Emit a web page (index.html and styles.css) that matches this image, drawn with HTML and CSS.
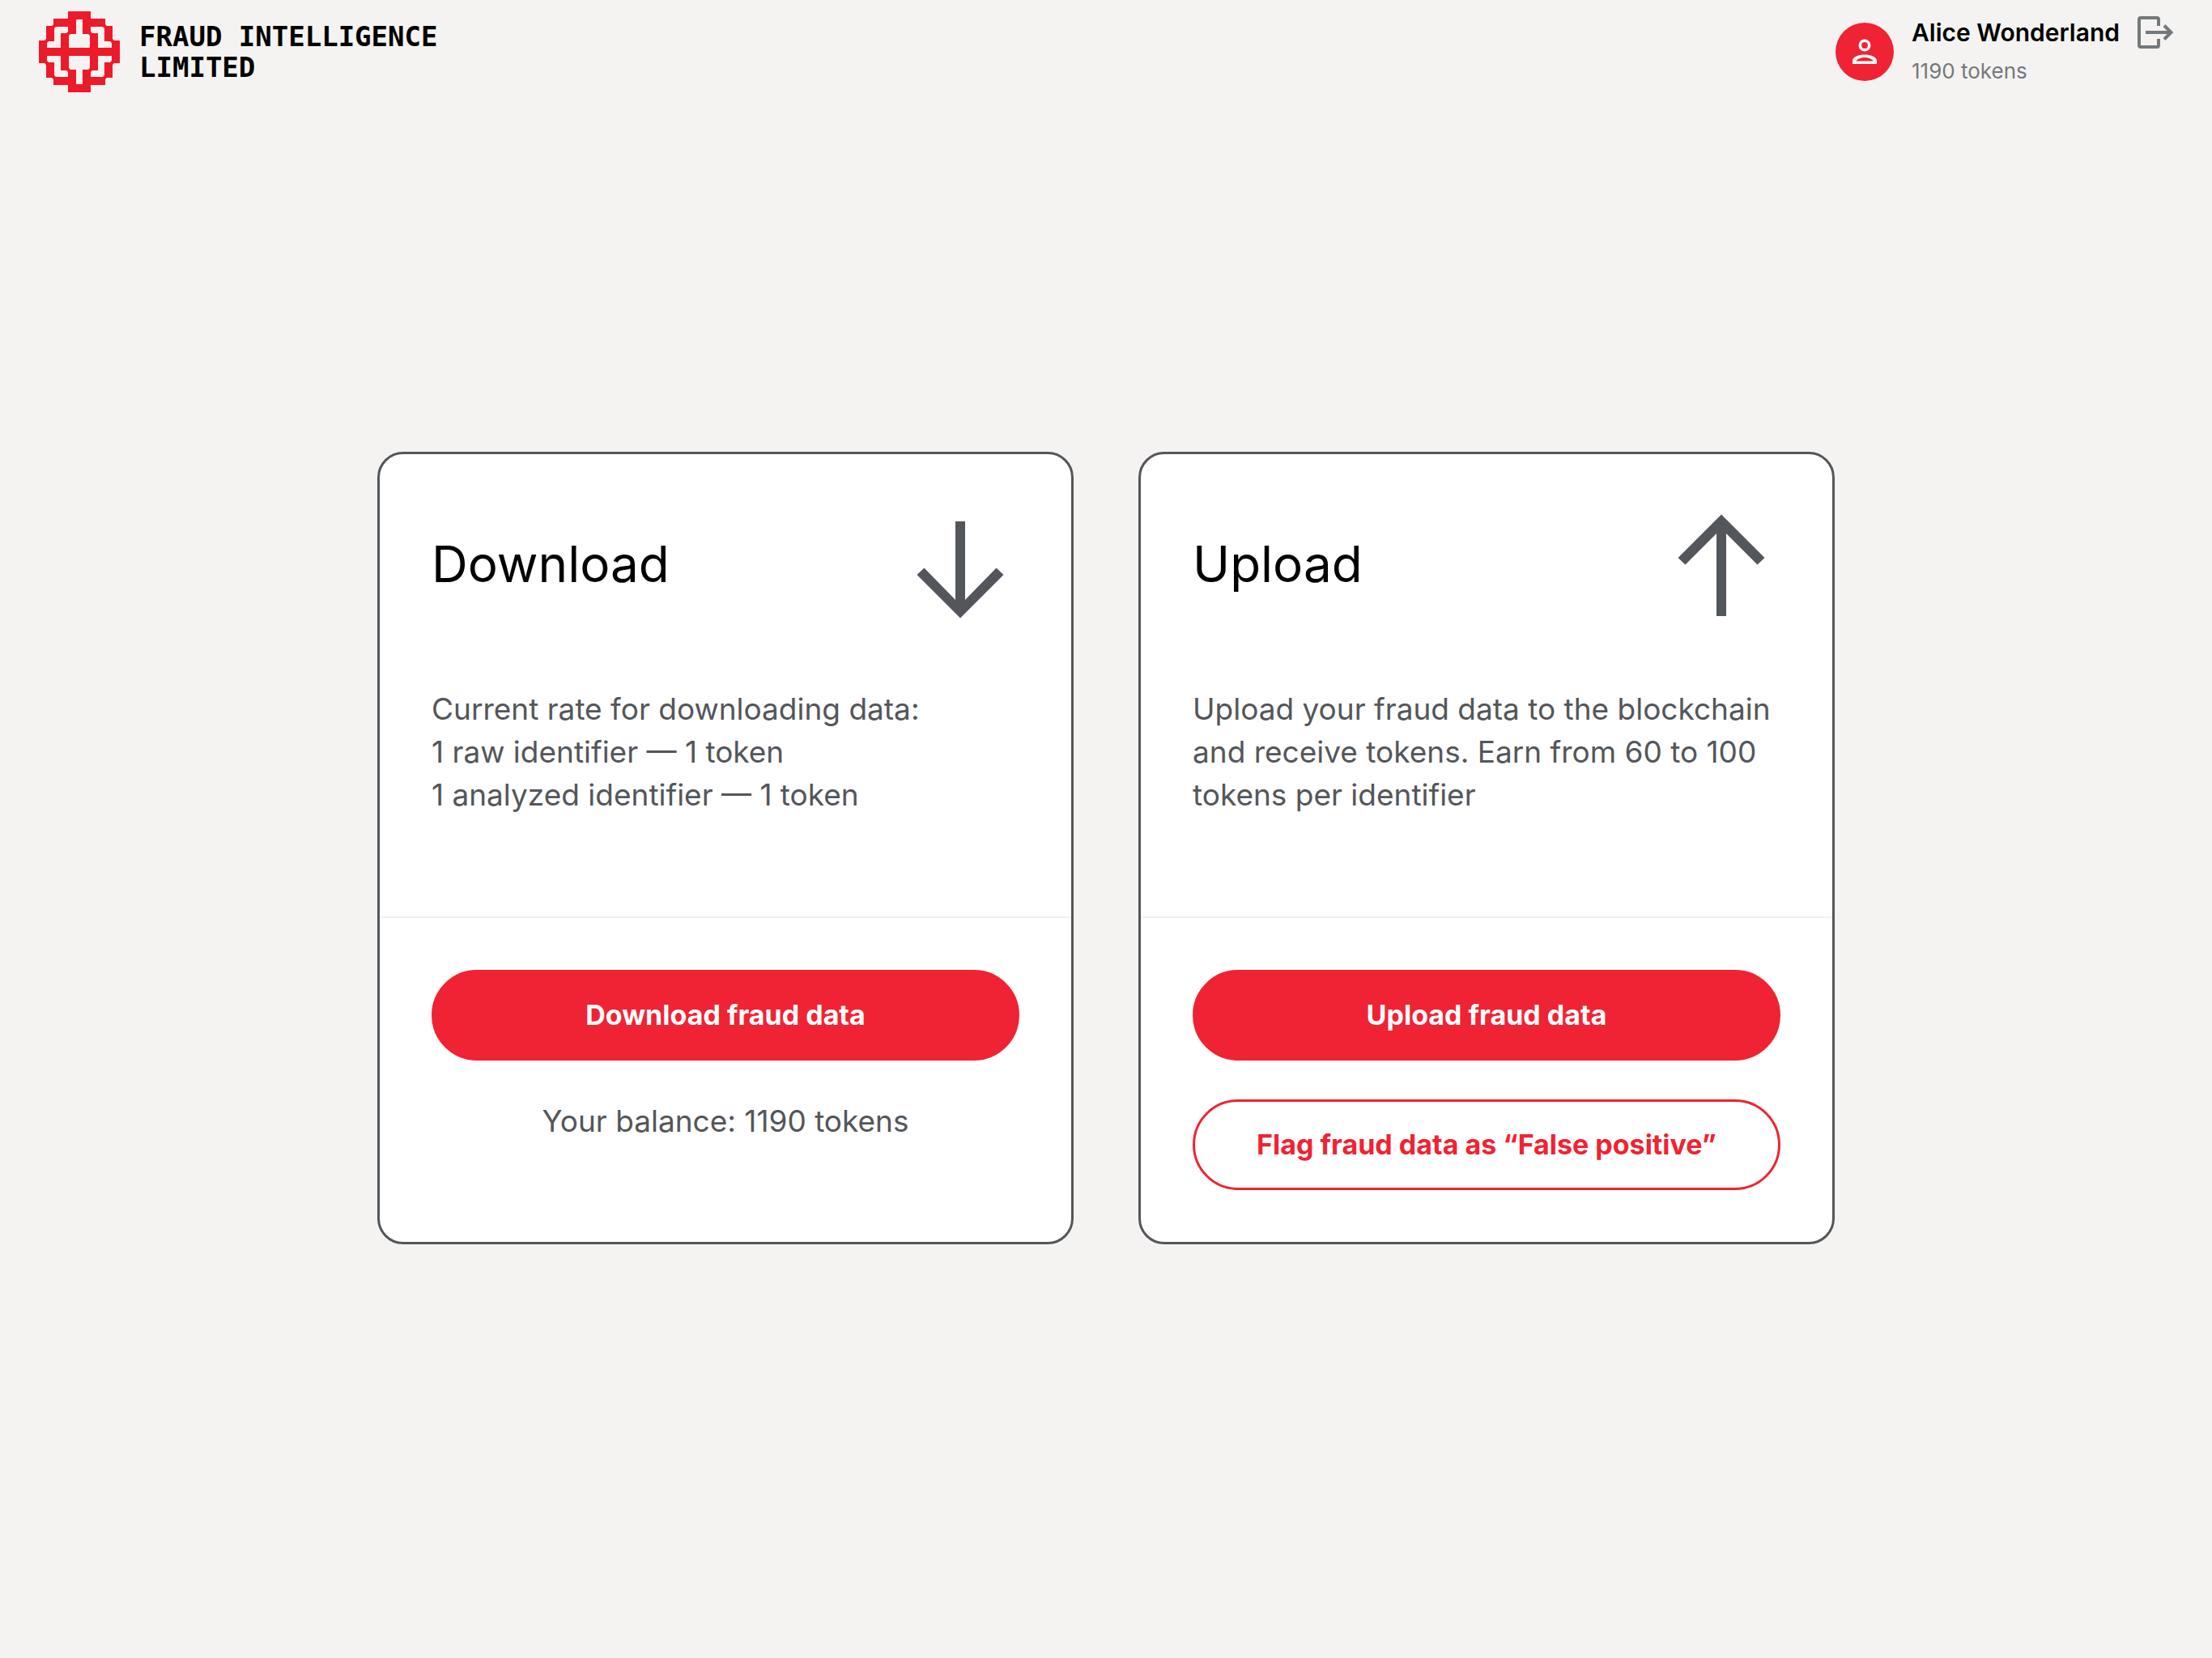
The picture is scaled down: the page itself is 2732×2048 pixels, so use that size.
FILE: index.html
```html
<!DOCTYPE html>
<html lang="en">
<head>
<meta charset="utf-8">
<title>Fraud Intelligence Limited</title>
<meta name="viewport" content="width=device-width, initial-scale=1">
<link rel="stylesheet" href="styles.css">
</head>
<body>
<header class="header">
  <a class="brand" href="#">
    <svg class="brand-mark" viewBox="-0.06 -0.06 11.12 11.12" aria-hidden="true">
      <path d="M4 0h3v1h2v1h1v2h1v3h-1v2h-1v1h-2v1h-3v-1h-2v-1h-1v-2h-1v-3h1v-2h1v-1h2zM5 1v2h-1v2h3v-2h-1v-2zM2 2v2h-1v1h2v-2h1v-1zM7 2v1h1v2h2v-1h-1v-2zM1 6v1h1v2h2v-1h-1v-2zM4 6v2h1v2h1v-2h1v-2zM8 6v2h-1v1h2v-2h1v-1z"/>
      <path class="brand-joints" d="M2 2h0M9 2h0M1 4h0M10 4h0M4 3h0M7 3h0M2 9h0M9 9h0M1 7h0M10 7h0M4 8h0M7 8h0"/>
    </svg>
    <span class="brand-name">FRAUD INTELLIGENCE<br>LIMITED</span>
  </a>
  <div class="user">
    <svg class="avatar" viewBox="0 0 72 72" aria-hidden="true">
      <circle cx="36" cy="36" r="36" fill="#ef2333"/>
      <circle cx="36" cy="28" r="5.7" fill="none" stroke="#fff" stroke-width="3.6"/>
      <path fill="#fff" fill-rule="evenodd" d="M21 51v-4c0-5 8-7.500 15-7.500s15 2.500 15 7.500v4zM25 47.500h22c-2-2.500-6-4.500-11-4.500s-9 2-11 4.500z"/>
    </svg>
    <div class="user-info">
      <div class="user-row">
        <span class="user-name">Alice Wonderland</span>
        <button class="logout" type="button" aria-label="Log out">
          <svg class="logout-icon" viewBox="0 0 44 42" aria-hidden="true">
            <path d="M26 13V5q0-2-2-2H4q-2 0-2 2v32q0 2 2 2h20q2 0 2-2v-8M10 21h31M33 12.500l8.500 8.500-8.500 8.500"/>
          </svg>
        </button>
      </div>
      <span class="user-tokens">1190 tokens</span>
    </div>
  </div>
</header>
<main class="main">
  <div class="cards">
    <section class="card">
      <div class="card-body">
        <div class="card-head">
          <h2 class="card-title">Download</h2>
          <svg class="card-icon" viewBox="0 0 144 144" aria-hidden="true">
            <path d="M65 19h12v97l38.500-39.500 9 8.500-53.500 53.500-53.500-53.500 9-8.500 38.500 39.500z"/>
          </svg>
        </div>
        <p class="text">Current rate for downloading data:<br>1 raw identifier — 1 token<br>1 analyzed identifier — 1 token</p>
      </div>
      <div class="card-actions">
        <button class="button" type="button">Download fraud data</button>
        <p class="text balance">Your balance: 1190 tokens</p>
      </div>
    </section>
    <section class="card">
      <div class="card-body">
        <div class="card-head">
          <h2 class="card-title">Upload</h2>
          <svg class="card-icon" viewBox="0 0 144 144" aria-hidden="true">
            <path d="M65 136h12v-102l38.500 38.500 9-8.500-53.500-53.500-53.500 53.500 9 8.500 38.500-38.500z"/>
          </svg>
        </div>
        <p class="text">Upload your fraud data to the blockchain<br>and receive tokens. Earn from 60 to 100<br>tokens per identifier</p>
      </div>
      <div class="card-actions">
        <button class="button" type="button">Upload fraud data</button>
        <button class="button button-outline" type="button">Flag fraud data as “False positive”</button>
      </div>
    </section>
  </div>
</main>
</body>
</html>
```
FILE: styles.css
```css
* {
  box-sizing: border-box;
}

body {
  display: flex;
  flex-direction: column;
  min-height: 100vh;
  margin: 0;
  background: #f4f3f1;
  color: #000;
  font-family: Inter, "Liberation Sans", sans-serif;
}

.header {
  display: flex;
  align-items: center;
  justify-content: space-between;
  padding: 14px 48px;
}

.brand {
  display: flex;
  align-items: center;
  gap: 24px;
  color: #000;
  text-decoration: none;
}

.brand-mark {
  width: 100px;
  height: 100px;
  fill: #ed1a2a;
  stroke: #ed1a2a;
  stroke-width: 0.12;
  stroke-linejoin: round;
}

.brand-joints {
  stroke-width: 0.5;
  stroke-linecap: round;
}

.brand-name {
  font: bold 34px/38px "DejaVu Sans Mono", monospace;
}

.user {
  display: flex;
  align-items: center;
  gap: 22px;
  margin: -14px 0;
}

.avatar {
  width: 72px;
  height: 72px;
}

.user-info {
  display: flex;
  flex-direction: column;
}

.user-row {
  display: flex;
  align-items: center;
  gap: 22px;
}

.user-name {
  font-size: 30px;
  font-weight: 600;
  line-height: 48px;
}

.user-tokens {
  color: #75787b;
  font-size: 26px;
  line-height: 48px;
}

.logout {
  display: flex;
  padding: 0;
  border: 0;
  background: none;
  cursor: pointer;
}

.logout-icon {
  width: 44px;
  height: 42px;
  fill: none;
  stroke: #75787b;
  stroke-width: 4;
}

.main {
  display: flex;
  flex: 1;
  align-items: center;
  justify-content: center;
  padding: 0 48px 81px;
}

.cards {
  display: grid;
  grid-template-columns: repeat(auto-fit, minmax(640px, 1fr));
  gap: 80px;
  flex: 1;
  max-width: 1800px;
}

.card {
  display: flex;
  flex-direction: column;
  border: 3px solid #53565a;
  border-radius: 32px;
  background: #fff;
}

.card-body {
  padding: 64px 64px 124px;
}

.card-head {
  display: flex;
  align-items: center;
  justify-content: space-between;
  margin-bottom: 80px;
}

.card-title {
  margin: 0;
  font-size: 62px;
  font-weight: 400;
  line-height: 72px;
}

.card-icon {
  width: 144px;
  height: 144px;
  fill: #53565a;
}

.text {
  margin: 0;
  color: #53565a;
  font-size: 37px;
  line-height: 53px;
}

.card-actions {
  display: flex;
  flex-direction: column;
  gap: 48px;
  padding: 64px;
  border-top: 2px solid #f0f3f3;
}

.balance {
  text-align: center;
}

.button {
  height: 112px;
  padding: 0 32px;
  border: 3px solid #ef2333;
  border-radius: 56px;
  background: #ef2333;
  color: #fff;
  font: bold 34px/48px Inter, "Liberation Sans", sans-serif;
  cursor: pointer;
}

.button-outline {
  background: #fff;
  color: #ef2333;
}
```
